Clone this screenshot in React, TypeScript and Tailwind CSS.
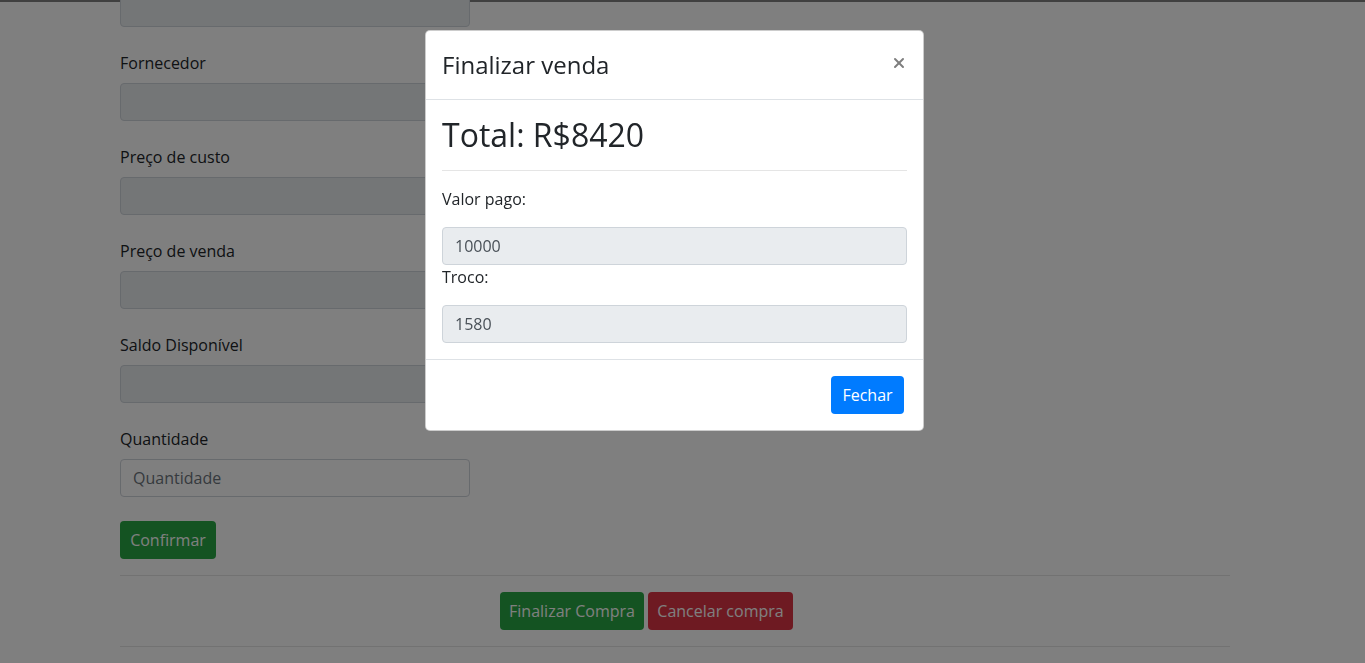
import { X } from "lucide-react";

type Field = {
  label?: string;
  placeholder?: string;
  disabled?: boolean;
};

const fields: Field[] = [
  { disabled: true },
  { label: "Fornecedor", disabled: true },
  { label: "Preço de custo", disabled: true },
  { label: "Preço de venda", disabled: true },
  { label: "Saldo Disponível", disabled: true },
  { label: "Quantidade", placeholder: "Quantidade" },
];

function FormGroup({ field }: { field: Field }) {
  return (
    <div className="mb-6">
      {field.label && (
        <label className="mb-2 block text-base leading-6 text-[#212529]">{field.label}</label>
      )}
      <input
        disabled={field.disabled}
        placeholder={field.placeholder}
        className={`block h-[38px] w-[350px] rounded-[4px] border border-[#ced4da] px-3 text-base text-[#495057] placeholder:text-[#6c757d] ${
          field.disabled ? "bg-[#e9ecef]" : "bg-white"
        }`}
      />
    </div>
  );
}

function SaleModal() {
  return (
    <div className="fixed left-[425px] top-[30px] w-[499px] rounded-[5px] border border-black/20 bg-white text-[#212529]">
      <div className="flex items-start justify-between border-b border-[#dee2e6] p-4">
        <h4 className="text-2xl font-medium leading-[36px]">Finalizar venda</h4>
        <button className="-m-4 ml-auto p-4 text-[#000] opacity-50">
          <X className="mt-[8px] h-[16px] w-[16px]" strokeWidth={3} />
        </button>
      </div>
      <div className="p-4">
        <h2 className="mb-4 text-[32px] font-medium leading-[1.2]">Total: R$8420</h2>
        <hr className="mb-4 border-black/10" />
        <label className="block text-base leading-6">Valor pago:</label>
        <input
          readOnly
          value="10000"
          className="mt-4 block h-[38px] w-full rounded-[4px] border border-[#ced4da] bg-[#e9ecef] px-3 text-base text-[#495057]"
        />
        <label className="block text-base leading-6">Troco:</label>
        <input
          readOnly
          value="1580"
          className="mt-4 block h-[38px] w-full rounded-[4px] border border-[#ced4da] bg-[#e9ecef] px-3 text-base text-[#495057]"
        />
      </div>
      <div className="flex justify-end border-t border-[#dee2e6] py-4 pl-4 pr-[19px]">
        <button className="h-[38px] w-[73px] rounded-[4px] bg-[#007bff] text-base text-white">
          Fechar
        </button>
      </div>
    </div>
  );
}

export default function App() {
  return (
    <div className="relative h-[663px] overflow-hidden bg-white font-['Open_Sans',sans-serif] text-base text-[#212529]">
      <div className="h-[2px] bg-[#808080]" />
      <div className="ml-[120px] mt-[-13px] w-[1110px]">
        {fields.map((f, i) => (
          <FormGroup key={i} field={f} />
        ))}
        <button className="h-[38px] w-[96px] rounded-[4px] bg-[#28a745] text-base text-white">
          Confirmar
        </button>
        <hr className="my-4 border-black/10" />
        <div className="ml-[380px] flex gap-1">
          <button className="h-[38px] w-[144px] rounded-[4px] bg-[#28a745] text-base text-white">
            Finalizar Compra
          </button>
          <button className="h-[38px] w-[145px] rounded-[4px] bg-[#dc3545] text-base text-white">
            Cancelar compra
          </button>
        </div>
        <hr className="my-4 border-black/10" />
      </div>
      <div className="fixed inset-0 bg-black/50" />
      <SaleModal />
    </div>
  );
}
